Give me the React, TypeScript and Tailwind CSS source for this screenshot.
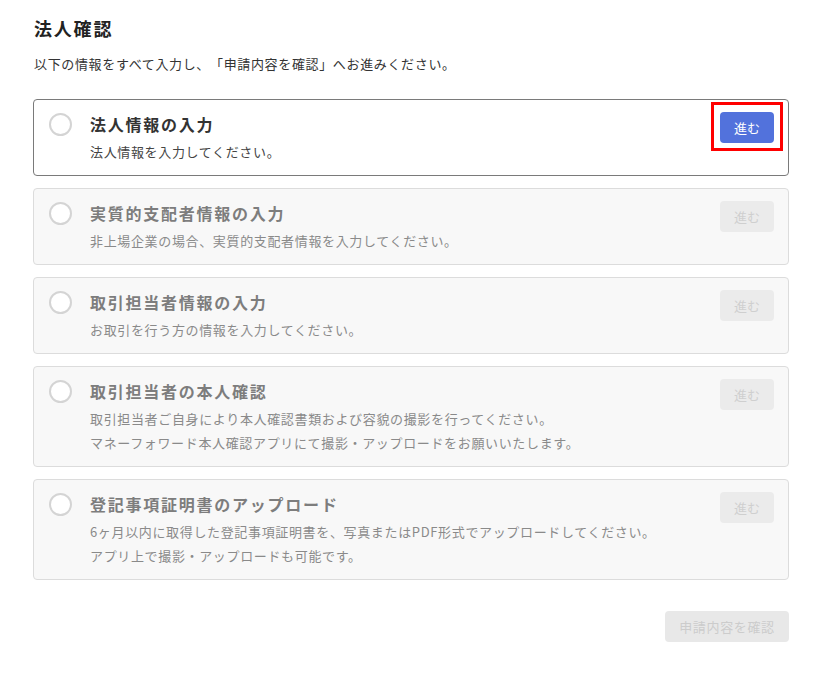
import React from "react";

type Step = {
  title: string;
  lines: string[];
  active?: boolean;
};

const steps: Step[] = [
  { title: "法人情報の入力", lines: ["法人情報を入力してください。"], active: true },
  { title: "実質的支配者情報の入力", lines: ["非上場企業の場合、実質的支配者情報を入力してください。"] },
  { title: "取引担当者情報の入力", lines: ["お取引を行う方の情報を入力してください。"] },
  {
    title: "取引担当者の本人確認",
    lines: [
      "取引担当者ご自身により本人確認書類および容貌の撮影を行ってください。",
      "マネーフォワード本人確認アプリにて撮影・アップロードをお願いいたします。",
    ],
  },
  {
    title: "登記事項証明書のアップロード",
    lines: [
      "6ヶ月以内に取得した登記事項証明書を、写真またはPDF形式でアップロードしてください。",
      "アプリ上で撮影・アップロードも可能です。",
    ],
  },
];

function StepCard({ step }: { step: Step }) {
  const on = step.active;
  return (
    <div
      className={
        on
          ? "flex items-start rounded-[4px] border border-[#7a7a7a] bg-white pl-[15px] pr-[14px] pt-[12px] pb-[11px]"
          : "flex items-start rounded-[4px] border border-[#dcdcdc] bg-[#f8f8f8] pl-[15px] pr-[14px] pt-[12px] pb-[11px]"
      }
    >
      {/* radio circle */}
      <div className="mt-[1px] h-[23px] w-[23px] shrink-0 rounded-full border-2 border-[#d4d4d4] bg-white" />

      <div className="ml-[18px] flex-1">
        <div
          className={
            on
              ? "text-[16px] font-bold leading-[24px] tracking-[0.11em] text-[#333333]"
              : "text-[16px] font-bold leading-[24px] tracking-[0.11em] text-[#7d7d7d]"
          }
        >
          {step.title}
        </div>
        <div
          className={
            on
              ? "mt-[4px] text-[13px] leading-[24px] tracking-[0.05em] text-[#444444]"
              : "mt-[4px] text-[13px] leading-[24px] tracking-[0.05em] text-[#8a8a8a]"
          }
        >
          {step.lines.map((l) => (
            <div key={l}>{l}</div>
          ))}
        </div>
      </div>

      {on ? (
        <div className="relative">
          <button className="h-[31px] w-[54px] rounded-[4px] bg-[#5272dc] text-[13px] text-white">進む</button>
          {/* highlight frame */}
          <span className="pointer-events-none absolute -left-[9px] -right-[9px] -top-[10px] -bottom-[8px] border-[3px] border-[#ff0000]" />
        </div>
      ) : (
        <button className="h-[31px] w-[54px] rounded-[4px] bg-[#ebebeb] text-[13px] text-[#cfcfcf]">進む</button>
      )}
    </div>
  );
}

export default function App() {
  return (
    <div
      className="min-h-[680px] w-[816px] bg-white [text-spacing-trim:space-all]"
      style={{ fontFamily: '"Noto Sans CJK JP", "Noto Sans", sans-serif' }}
    >
      <div className="ml-[33px] w-[756px] pt-[14px]">
        <h1 className="pl-[1px] text-[18px] font-bold leading-[28px] tracking-[0.1em] text-[#222222]">法人確認</h1>
        <p className="mt-[10px] pl-[1px] text-[13px] leading-[24px] tracking-[0.05em] text-[#333333]">
          以下の情報をすべて入力し、「申請内容を確認」へお進みください。
        </p>

        <div className="mt-[23px] flex flex-col gap-[12px]">
          {steps.map((s) => (
            <StepCard key={s.title} step={s} />
          ))}
        </div>

        <div className="mt-[31px] flex justify-end">
          <button className="h-[31px] w-[124px] rounded-[4px] bg-[#e8e8e8] text-[13px] tracking-[0.05em] text-[#cccccc]">
            申請内容を確認
          </button>
        </div>
      </div>
    </div>
  );
}
